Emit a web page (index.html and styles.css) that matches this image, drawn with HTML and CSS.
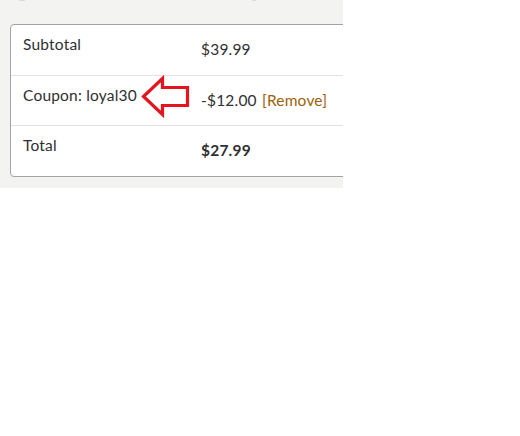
FILE: index.html
```html
<!DOCTYPE html>
<html>
<head>
<meta charset="utf-8">
<link rel="stylesheet" href="styles.css">
</head>
<body>
<div class="panel">
  <span class="stub stub-a"></span>
  <span class="stub stub-b"></span>
  <div class="card">
    <table class="totals">
      <tr>
        <th>Subtotal</th>
        <td>$39.99</td>
      </tr>
      <tr>
        <th>Coupon: loyal30</th>
        <td>-$12.00 <a class="remove" href="#">[Remove]</a></td>
      </tr>
      <tr class="last">
        <th>Total</th>
        <td><strong>$27.99</strong></td>
      </tr>
    </table>
  </div>
  <svg class="arrow" width="60" height="50" viewBox="138 74 60 50">
    <path d="M143.5,96.5 L162.5,78.5 L162.5,87.5 L187.5,87.5 L187.5,105.5 L162.5,105.5 L162.5,114.5 Z" fill="none" stroke="#e3161f" stroke-width="3.2" stroke-linejoin="miter"/>
  </svg>
</div>
</body>
</html>
```
FILE: styles.css
```css
html, body {
  margin: 0;
  padding: 0;
  background: #ffffff;
}
body {
  font-family: "Lato", "Open Sans", sans-serif;
  color: #2f2f33;
}
.panel {
  position: relative;
  width: 343px;
  height: 188px;
  background: #f3f3f1;
  overflow: hidden;
  padding: 24px 0 0 10px;
  box-sizing: border-box;
}
.stub {
  position: absolute;
  top: 0;
  height: 1px;
  background: #dcdcda;
}
.stub-a { left: 19px; width: 6px; }
.stub-b { left: 252px; width: 4px; }
.card {
  width: 420px;
  background: #ffffff;
  border: 1px solid #a3a3a3;
  border-radius: 4px;
  box-sizing: border-box;
}
.totals {
  width: 100%;
  table-layout: fixed;
  border-collapse: collapse;
  font-size: 15.5px;
  letter-spacing: 0.2px;
}
.totals th, .totals td {
  height: 50px;
  box-sizing: border-box;
  border-bottom: 1px solid #e2e2e2;
  padding: 0 12px;
  text-align: left;
  white-space: nowrap;
}
.totals tr.last th, .totals tr.last td {
  height: 51px;
  border-bottom: none;
}
.totals th {
  font-weight: normal;
  width: 178px;
  vertical-align: top;
  padding-top: 10px;
}
.totals td {
  vertical-align: top;
  padding-top: 15px;
}
.totals strong {
  font-weight: 700;
}
.remove {
  color: #a0600a;
  text-decoration: none;
  margin-left: 1px;
}
.arrow {
  position: absolute;
  left: 138px;
  top: 74px;
}
```
